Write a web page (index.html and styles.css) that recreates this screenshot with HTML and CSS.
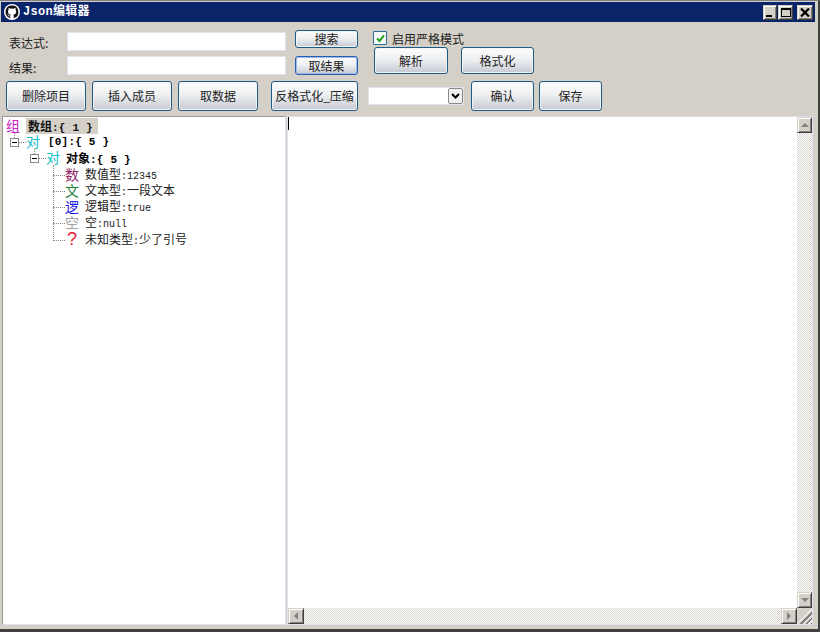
FILE: index.html
```html
<!DOCTYPE html>
<html lang="zh">
<head>
<meta charset="utf-8">
<title>Json编辑器</title>
<link rel="stylesheet" href="styles.css">
</head>
<body>
<div class="window">
  <header class="titlebar">
    <svg class="logo" width="16" height="16" viewBox="0 0 16 16"><circle cx="8" cy="8" r="8" fill="#fff"/><path fill="#111" d="M8 1.600a6.400 6.400 0 0 0-2 12.500c.3 0 .5-.2.5-.4v-1.300c-1.800.4-2.200-.8-2.200-.8-.3-.7-.7-.9-.7-.9-.6-.4 0-.4 0-.4.700 0 1 .7 1 .7.600 1 1.500.7 1.900.5 0-.4.200-.7.400-.9-1.400-.2-2.900-.7-2.900-3.200 0-.7.200-1.300.7-1.700-.1-.2-.3-.8 0-1.700 0 0 .5-.2 1.800.7a6 6 0 0 1 3.200 0c1.300-.9 1.800-.7 1.800-.7.300.9.100 1.500 0 1.700.400.4.700 1 .7 1.700 0 2.500-1.500 3-2.900 3.200.2.200.4.600.4 1.200v1.800c0 .2.200.4.500.4A6.400 6.400 0 0 0 8 1.600z"/></svg>
    <span class="title">Json编辑器</span>
    <div class="caption-buttons">
      <button class="caption cap-min"><span class="glyph-min"></span></button>
      <button class="caption cap-max"><span class="glyph-max"></span></button>
      <button class="caption cap-close"><svg width="10" height="9" viewBox="0 0 10 9"><path d="M1 0.500 L9 8.500 M9 0.500 L1 8.500" stroke="#000" stroke-width="2.200"/></svg></button>
    </div>
  </header>

  <section class="toolbar">
    <div class="top-rows">
      <div class="search-grid">
        <label class="field-label">表达式:</label>
        <input class="text-input" type="text">
        <button class="btn btn-small">搜索</button>
        <label class="field-label field-label-2">结果:</label>
        <input class="text-input" type="text">
        <button class="btn btn-small btn-focus">取结果</button>
      </div>
      <div class="parse-group">
        <label class="check-row"><span class="checkbox"><svg width="9" height="9" viewBox="0 0 9 9"><path d="M1 4.500 L3.500 7 L8 1.500" fill="none" stroke="#21a121" stroke-width="2"/></svg></span>启用严格模式</label>
        <div class="parse-buttons">
          <button class="btn btn-parse w-74">解析</button>
          <button class="btn btn-parse w-73">格式化</button>
        </div>
      </div>
    </div>
    <div class="action-row">
      <button class="btn btn-action w-a">删除项目</button>
      <button class="btn btn-action w-a gap-6">插入成员</button>
      <button class="btn btn-action w-a gap-6">取数据</button>
      <button class="btn btn-action w-b gap-13">反格式化_压缩</button>
      <div class="combo"><span class="combo-arrow"><svg width="9" height="6" viewBox="0 0 9 6"><path d="M1 1 L4.500 4.500 L8 1" fill="none" stroke="#000" stroke-width="2"/></svg></span></div>
      <button class="btn btn-action w-c gap-7">确认</button>
      <button class="btn btn-action w-c gap-5">保存</button>
    </div>
  </section>

  <main class="panes">
    <div class="tree">
      <div class="row row-root"><span class="ico c-arr">组</span><span class="node-sel"><b>数组</b><b class="lat">:{ 1 }</b></span></div>
      <div class="row row-l1"><span class="toggle"></span><span class="stub"></span><span class="ico c-obj">对</span><b class="lat node node-wide">[0]:{ 5 }</b></div>
      <div class="row row-l2"><span class="toggle"></span><span class="stub"></span><span class="ico c-obj">对</span><b class="node">对象<span class="lat">:{ 5 }</span></b></div>
      <div class="leaves">
        <div class="row row-leaf"><span class="leaf-stub"></span><span class="ico c-num">数</span><span class="node">数值型<span class="val">:12345</span></span></div>
        <div class="row row-leaf"><span class="leaf-stub"></span><span class="ico c-txt">文</span><span class="node">文本型<span class="val">:</span>一段文本</span></div>
        <div class="row row-leaf"><span class="leaf-stub"></span><span class="ico c-bool">逻</span><span class="node">逻辑型<span class="val">:true</span></span></div>
        <div class="row row-leaf"><span class="leaf-stub"></span><span class="ico c-null">空</span><span class="node">空<span class="val">:null</span></span></div>
        <div class="row row-leaf"><span class="leaf-stub"></span><span class="ico c-unk">?</span><span class="node">未知类型<span class="val">:</span>少了引号</span></div>
      </div>
    </div>
    <div class="editor">
      <div class="editor-main">
        <div class="text-area"><span class="caret"></span></div>
        <div class="vscroll">
          <span class="sb-btn"><span class="tri tri-up"></span></span>
          <span class="sb-track"></span>
          <span class="sb-btn"><span class="tri tri-down"></span></span>
        </div>
      </div>
      <div class="hscroll">
        <span class="sb-btn"><span class="tri tri-left"></span></span>
        <span class="sb-track"></span>
        <span class="sb-btn"><span class="tri tri-right"></span></span>
        <span class="grip"></span>
      </div>
    </div>
  </main>
</div>
</body>
</html>
```
FILE: styles.css
```css
* { box-sizing: border-box; }
html, body { margin: 0; padding: 0; }
body { width: 820px; height: 632px; overflow: hidden; background: #d4d0c8; font-family: "Noto Sans CJK SC", "Liberation Sans", sans-serif; font-size: 12px; color: #222; }
.window { width: 820px; height: 632px; display: flex; flex-direction: column; padding: 1px 3px 4px 1px; border-top: 1px solid #808080; border-right: 2px solid #404040; border-bottom: 3px solid #404040; background: #d4d0c8; }

.titlebar { flex: none; height: 20px; background: #0a246a; display: flex; align-items: center; padding-left: 3px; color: #fff; }
.logo { flex: none; }
.title { margin-left: 3px; font-family: "Liberation Mono", "Noto Sans CJK SC", monospace; font-weight: 700; font-size: 12px; letter-spacing: .3px; line-height: 20px; }
.caption-buttons { margin-left: auto; display: flex; padding-right: 2px; }
.caption { width: 15px; height: 15px; padding: 0; margin: 0; background: #d4d0c8; border: 1px solid; border-color: #d4d0c8 #404040 #404040 #d4d0c8; box-shadow: inset 1px 1px #fff, inset -1px -1px #808080; display: flex; align-items: center; justify-content: center; }
.cap-min { width: 14px; }
.cap-max { margin-left: 1px; }
.cap-close { width: 16px; margin-left: 4px; }
.glyph-min { width: 6px; height: 2px; background: #000; align-self: flex-end; margin-bottom: 2px; margin-right: 2px; }
.glyph-max { width: 10px; height: 9px; border: 1px solid #000; border-top-width: 2px; }

.toolbar { flex: none; height: 89px; padding: 6px 0 0 5px; display: flex; flex-direction: column; }
.top-rows { display: flex; height: 46px; }
.search-grid { display: grid; grid-template-columns: 61px 219px 72px; grid-template-rows: 24px 22px; align-items: start; width: 368px; }
.search-grid .btn { justify-self: end; }
.field-label { padding: 5px 0 0 3px; font-size: 12px; line-height: 20px; color: #222; }
.field-label-2 { padding-top: 6px; }
.text-input { width: 219px; height: 19px; margin-top: 4px; border: 1px solid #e2e2ee; background: #fff; padding: 0; outline: 0; }
.btn { font-family: "Noto Sans CJK SC", sans-serif; font-size: 12px; color: #222; padding: 0; margin: 0; border: 1px solid #1d5a86; border-radius: 3px; background: linear-gradient(#fdfdfd, #eef0f2 45%, #c6cad2); box-shadow: inset 0 0 0 1px #f4f4f4; line-height: 1; }
.btn-small { width: 63px; height: 18px; margin-top: 2px; }
.search-grid .btn-focus { height: 19px; margin-top: 4px; border-color: #2a5fae; box-shadow: inset 0 0 0 1px #9cb8ee; }
.parse-group { display: flex; flex-direction: column; margin-left: -1px; }
.check-row { display: flex; align-items: center; height: 14px; margin-top: 3px; font-size: 12px; color: #222; }
.checkbox { width: 14px; height: 14px; border: 1px solid #2e6a9a; border-radius: 1px; background: #f6f6f6; margin-right: 5px; display: flex; align-items: center; justify-content: center; }
.parse-buttons { display: flex; gap: 13px; margin-top: 2px; padding-left: 1px; }
.btn-parse { height: 27px; }
.w-74 { width: 74px; }
.w-73 { width: 73px; }

.action-row { display: flex; align-items: center; height: 30px; margin-top: 7px; }
.btn-action { height: 30px; }
.w-a { width: 80px; }
.w-b { width: 87px; }
.w-c { width: 63px; }
.gap-5 { margin-left: 5px; }
.gap-6 { margin-left: 6px; }
.gap-7 { margin-left: 7px; }
.gap-13 { margin-left: 13px; }
.combo { width: 96px; height: 18px; margin: -1px 0 0 10px; background: #fff; border: 1px solid #e2e2ee; display: flex; justify-content: flex-end; align-items: center; }
.combo-arrow { width: 15px; height: 16px; background: #f0f0f0; border: 1px solid #888; border-radius: 2px; display: flex; align-items: center; justify-content: center; }

.panes { flex: 1; min-height: 0; display: flex; margin-top: 5px; padding: 0 2px 0 1px; }
.tree { width: 284px; flex: none; background: #fff; border: 1px solid #e0e0ee; border-top-color: #999; border-left-color: #999; padding-top: 1px; font-size: 12px; line-height: 16px; }
.row { height: 16.300px; display: flex; align-items: center; white-space: nowrap; color: #222; }
.ico { width: 14px; font-size: 14px; line-height: 16px; flex: none; text-align: center; margin-bottom: 3px; }
.row-root { padding-left: 3px; }
.node-sel { margin-left: 6px; background: #d4d0c8; padding: 0 2px; width: 72px; height: 16px; line-height: 16px; color: #111; }
.row-l1 { padding-left: 7px; }
.row-l2 { padding-left: 27px; }
.toggle { width: 9px; height: 9px; border: 1px solid #888; flex: none; position: relative; background: #fff; }
.toggle::after { content: ""; position: absolute; left: 1px; right: 1px; top: 3px; height: 1px; background: #000; }
.toggle::before { content: ""; position: absolute; left: 3px; top: -6px; height: 5px; border-left: 1px dotted #888; }
.stub { width: 7px; border-top: 1px dotted #888; flex: none; }
.node { margin-left: 6px; color: #222; }
.node-wide { margin-left: 8px; }
b.node { color: #000; }
.lat { font-family: "Liberation Mono", monospace; font-size: 11px; letter-spacing: .2px; font-weight: 700; }
.val { font-family: "Liberation Mono", monospace; font-size: 10px; }
.leaves { position: relative; padding-left: 50px; }
.leaves::before { content: ""; position: absolute; left: 50px; top: -2px; height: 74px; border-left: 1px dotted #888; }
.leaf-stub { width: 12px; border-top: 1px dotted #888; flex: none; }
.c-arr { color: #d020c8; }
.c-obj { color: #10c0c8; }
.c-num { color: #902868; }
.c-txt { color: #208040; }
.c-bool { color: #1010e8; }
.c-null { color: #a0a0a0; }
.c-unk { color: #e81c30; font-family: "Liberation Sans", sans-serif; font-size: 18px; }

.editor { flex: 1; min-width: 0; margin-left: 1px; display: flex; flex-direction: column; border: 1px solid #e0e0ee; background: #fff; }
.editor-main { flex: 1; min-height: 0; display: flex; }
.text-area { flex: 1; }
.caret { display: block; width: 1px; height: 13px; background: #000; }
.vscroll { width: 15px; flex: none; display: flex; flex-direction: column; }
.hscroll { height: 16px; flex: none; display: flex; }
.hscroll .sb-btn { width: 16px; }
.sb-btn { flex: none; width: 15px; height: 16px; background: #d4d0c8; border: 1px solid; border-color: #d4d0c8 #404040 #404040 #d4d0c8; box-shadow: inset 1px 1px #fff, inset -1px -1px #808080; display: flex; align-items: center; justify-content: center; }
.sb-track { flex: 1; background-color: #eeece8; background-image: conic-gradient(#fff 25%, #d8d5cf 0 50%, #fff 0 75%, #d8d5cf 0); background-size: 2px 2px; }
.tri { width: 0; height: 0; border-style: solid; border-color: transparent; }
.tri-up { border-width: 0 4px 4px; border-bottom-color: #808080; }
.tri-down { border-width: 4px 4px 0; border-top-color: #808080; }
.tri-left { border-width: 4px 4px 4px 0; border-right-color: #808080; }
.tri-right { border-width: 4px 0 4px 4px; border-left-color: #808080; }
.grip { flex: none; width: 15px; background: linear-gradient(135deg, #d4d0c8 50%, transparent 50%), repeating-linear-gradient(135deg, #d4d0c8 0 1px, #808080 1px 2px, #808080 2px 3px, #fff 3px 4px); }
```
